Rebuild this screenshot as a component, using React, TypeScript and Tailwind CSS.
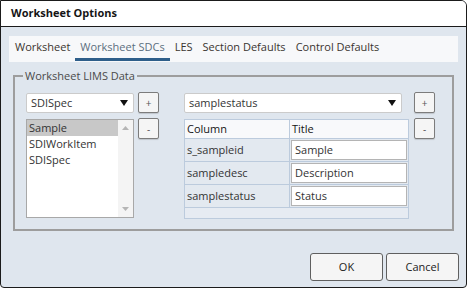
import React from 'react';

const tabs = ['Worksheet', 'Worksheet SDCs', 'LES', 'Section Defaults', 'Control Defaults'];

const listItems = ['Sample', 'SDIWorkItem', 'SDISpec'];

const rows = [
  { column: 's_sampleid', title: 'Sample' },
  { column: 'sampledesc', title: 'Description' },
  { column: 'samplestatus', title: 'Status' },
];

const Caret = () => (
  <svg width="8" height="6" viewBox="0 0 8 6">
    <polygon points="0,0 8,0 4,6" fill="#111" />
  </svg>
);

const SmallButton = ({ label }: { label: string }) => (
  <div className="w-[21px] h-[21px] border border-[#7c7c7c] rounded-[2px] bg-[#f5f5f5] shadow-[0_1px_1px_rgba(0,0,0,0.15)] flex items-center justify-center text-[10px] leading-none text-[#555]">
    {label}
  </div>
);

const Select = ({ value, width }: { value: string; width: string }) => (
  <div className={`${width} h-[20px] bg-white border border-[#cbcbcb] rounded-[2px] flex items-center justify-between pl-[4px] pr-[5px] text-[11px] text-[#333]`}>
    <span>{value}</span>
    <Caret />
  </div>
);

export default function App() {
  return (
    <div className="w-[468px] h-[288px] bg-white font-['Open_Sans',sans-serif]">
      <div className="w-[467px] h-[288px] border border-[#1b1b1b] rounded-tr-[6px] rounded-b-[4px] overflow-hidden flex flex-col bg-[#dfe6ee]">
        <div className="h-[26px] shrink-0 bg-white border-b border-[#1b1b1b] flex items-center pl-[10px] text-[11px] font-bold text-[#151515]">
          Worksheet Options
        </div>

        <div className="flex-1 flex flex-col">
          {/* tabs */}
          <div className="mx-[8px] mt-[9px] h-[26px] bg-[#f7f8fa] flex items-start pl-[1px]">
            {tabs.map((t) => (
              <div
                key={t}
                className={
                  t === 'Worksheet SDCs'
                    ? 'h-[25px] px-[5px] flex items-center border-b-[3px] border-[#2e5e8a] text-[11px] text-[#5b6e7e]'
                    : 'h-[25px] px-[5px] flex items-center border-b-[3px] border-transparent text-[11px] text-[#3a3530]'
                }
              >
                {t}
              </div>
            ))}
          </div>

          {/* fieldset */}
          <fieldset className="mx-[12px] mt-[6px] border-2 border-[#9d9d9d]">
            <legend className="ml-[8px] px-[2px] text-[11px] leading-[16px] text-[#4a4a4a]">Worksheet LIMS Data</legend>
            <div className="flex items-start pl-[11px] pt-[9px] pb-[10px]">
              <div className="w-[108px] flex flex-col gap-[6px]">
                <Select value="SDISpec" width="w-[108px]" />
                <div className="h-[99px] bg-white border border-[#a8a8a8] flex">
                  <div className="flex-1 flex flex-col text-[11px] text-[#333]">
                    {listItems.map((it, i) => (
                      <div key={it} className={i === 0 ? 'h-[16px] leading-[16px] pl-[2px] bg-[#c8c8c8]' : 'h-[16px] leading-[16px] pl-[2px]'}>
                        {it}
                      </div>
                    ))}
                  </div>
                  <div className="w-[15px] bg-[#f4f4f4] flex flex-col items-center justify-between py-[6px]">
                    <svg width="7" height="4" viewBox="0 0 7 4">
                      <polygon points="0,4 7,4 3.5,0" fill="#b5b5b5" />
                    </svg>
                    <svg width="7" height="4" viewBox="0 0 7 4">
                      <polygon points="0,0 7,0 3.5,4" fill="#b5b5b5" />
                    </svg>
                  </div>
                </div>
              </div>

              <div className="ml-[4px] -mt-[1px] flex flex-col gap-[5px]">
                <SmallButton label="+" />
                <SmallButton label="-" />
              </div>

              <div className="ml-[25px] w-[225px] flex flex-col gap-[6px]">
                <Select value="samplestatus" width="w-[218px]" />
                <div className="h-[100px] border border-[#bccbdd] bg-[#e3e9f0] flex flex-col text-[11px]">
                  <div className="h-[19px] shrink-0 flex bg-[#f8f9fb] border-b border-[#bccbdd] text-[#151515]">
                    <div className="w-[105px] border-r border-[#bccbdd] pl-[2px] leading-[18px]">Column</div>
                    <div className="flex-1 pl-[2px] leading-[18px]">Title</div>
                  </div>
                  {rows.map((r) => (
                    <div key={r.column} className="h-[23px] shrink-0 flex border-b border-[#bccbdd] text-[#333]">
                      <div className="w-[105px] border-r border-[#bccbdd] pl-[2px] flex items-center">{r.column}</div>
                      <div className="flex-1 px-[1px] flex items-center">
                        <div className="w-full h-[20px] bg-white border border-[#b4b4b4] pl-[3px] flex items-center">{r.title}</div>
                      </div>
                    </div>
                  ))}
                  <div className="flex-1 bg-[#e6ebf2]" />
                </div>
              </div>

              <div className="ml-[5px] -mt-[1px] flex flex-col gap-[5px]">
                <SmallButton label="+" />
                <SmallButton label="-" />
              </div>
            </div>
          </fieldset>

          {/* footer buttons */}
          <div className="mt-[22px] flex justify-end gap-[3px] pr-[7px]">
            <div className="w-[73px] h-[28px] bg-[#f5f5f5] border border-[#5f5f5f] rounded-[3px] flex items-center justify-center text-[11px] text-[#222]">OK</div>
            <div className="w-[73px] h-[28px] bg-[#f5f5f5] border border-[#5f5f5f] rounded-[3px] flex items-center justify-center text-[11px] text-[#222]">Cancel</div>
          </div>
        </div>
      </div>
    </div>
  );
}
